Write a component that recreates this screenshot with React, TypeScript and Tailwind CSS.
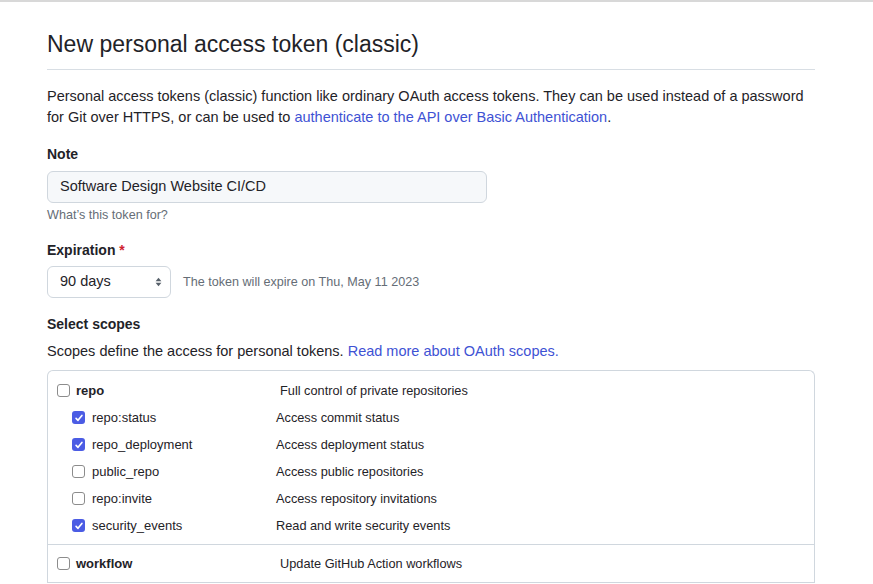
import React from 'react';

type Scope = { name: string; desc: string; checked: boolean };

const repoScopes: Scope[] = [
  { name: 'repo:status', desc: 'Access commit status', checked: true },
  { name: 'repo_deployment', desc: 'Access deployment status', checked: true },
  { name: 'public_repo', desc: 'Access public repositories', checked: false },
  { name: 'repo:invite', desc: 'Access repository invitations', checked: false },
  { name: 'security_events', desc: 'Read and write security events', checked: true },
];

function Checkbox({ checked }: { checked: boolean }) {
  if (checked) {
    return (
      <span className="flex h-[13px] w-[13px] shrink-0 items-center justify-center rounded-[3px] bg-[#4b5ce4]">
        <svg viewBox="0 0 12 12" className="h-[10px] w-[10px]" fill="none" stroke="white" strokeWidth={2} strokeLinecap="round" strokeLinejoin="round">
          <path d="M2.5 6.5l2.3 2.3L9.5 3" />
        </svg>
      </span>
    );
  }
  return <span className="h-[13px] w-[13px] shrink-0 rounded-[3px] border border-[#8c8c8c] bg-white" />;
}

function TopRow({ scope }: { scope: Scope }) {
  return (
    <div className="flex h-[27px] items-center pl-[9px]">
      <Checkbox checked={scope.checked} />
      <span className="ml-[6px] w-[204px] text-[13px] font-bold text-[#1f2328]">{scope.name}</span>
      <span className="text-[12.75px] text-[#1f2328]">{scope.desc}</span>
    </div>
  );
}

function SubRow({ scope }: { scope: Scope }) {
  return (
    <div className="flex h-[27px] items-center pl-[24px]">
      <Checkbox checked={scope.checked} />
      <span className="ml-[7px] w-[184px] text-[13px] text-[#1f2328]">{scope.name}</span>
      <span className="text-[12.75px] text-[#1f2328]">{scope.desc}</span>
    </div>
  );
}

export default function App() {
  return (
    <div className="min-h-[584px] border-t-2 border-[#d8d8d8] bg-white font-['Liberation_Sans',Arial,sans-serif] text-[#1f2328]">
      <div className="w-[815px] pl-[47px] pt-[27px]">
        <div className="border-b border-[#d8dee4] pb-[10px]">
          <h1 className="text-[23px] leading-[30px] font-normal">New personal access token (classic)</h1>
        </div>

        <p className="mt-[16px] text-[14.5px] leading-[21px]">
          Personal access tokens (classic) function like ordinary OAuth access tokens. They can be used instead of a password
          for Git over HTTPS, or can be used to{' '}
          <a className="text-[#3e52d4]">authenticate to the API over Basic Authentication</a>.
        </p>

        <div className="mt-[16px]">
          <div className="text-[14px] leading-[21px] font-bold">Note</div>
          <div className="mt-[6px] flex h-[32px] w-[440px] items-center rounded-[6px] border border-[#d0d7de] bg-[#f6f8fa] px-[12px] text-[14.5px]">
            Software Design Website CI/CD
          </div>
          <div className="mt-[3px] text-[12.6px] leading-[18px] text-[#656d76]">What’s this token for?</div>
        </div>

        <div className="mt-[16px]">
          <div className="text-[14px] leading-[21px] font-bold">
            Expiration <span className="text-[#cf222e]">*</span>
          </div>
          <div className="mt-[5px] flex items-center">
            <div className="flex h-[32px] w-[124px] items-center justify-between rounded-[6px] border border-[#d0d7de] bg-white pl-[12px] pr-[8px] text-[14.5px]">
              <span>90 days</span>
              <svg viewBox="0 0 8 12" className="h-[10px] w-[7px]" fill="#57606a">
                <path d="M4 1L7.5 5H0.5z" />
                <path d="M4 11L0.5 7H7.5z" />
              </svg>
            </div>
            <span className="ml-[12px] text-[12.6px] text-[#656d76]">The token will expire on Thu, May 11 2023</span>
          </div>
        </div>

        <div className="mt-[16px]">
          <div className="text-[14px] leading-[21px] font-bold">Select scopes</div>
          <p className="mt-[6px] text-[14.5px] leading-[21px]">
            Scopes define the access for personal tokens.{' '}
            <a className="text-[#3e52d4]">Read more about OAuth scopes.</a>
          </p>
        </div>

        <div className="mt-[8px] rounded-t-[6px] border border-b-0 border-[#d0d7de]">
          <div className="border-b border-[#d0d7de] pb-[5px] pt-[6px]">
            <TopRow scope={{ name: 'repo', desc: 'Full control of private repositories', checked: false }} />
            {repoScopes.map((s) => (
              <SubRow key={s.name} scope={s} />
            ))}
          </div>
          <div className="border-b border-[#d0d7de] pb-[5px] pt-[5px]">
            <TopRow scope={{ name: 'workflow', desc: 'Update GitHub Action workflows', checked: false }} />
          </div>
        </div>
      </div>
    </div>
  );
}
